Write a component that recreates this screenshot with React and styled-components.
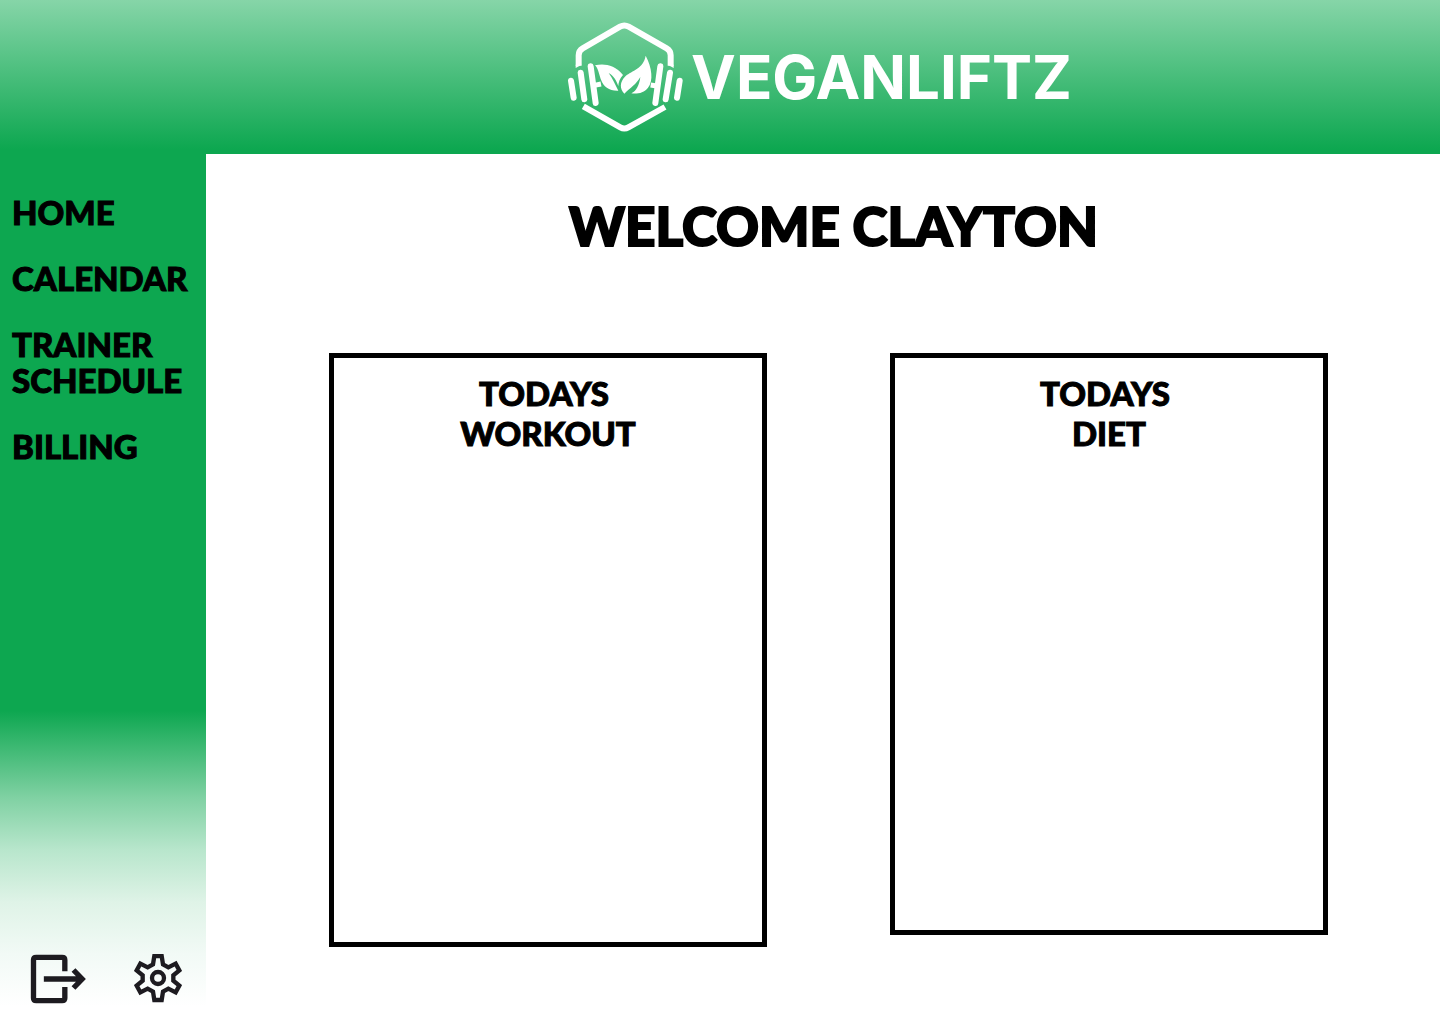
import React from "react";
import styled, { createGlobalStyle } from "styled-components";

const GlobalStyle = createGlobalStyle`
  *, *::before, *::after { box-sizing: border-box; }
  body {
    margin: 0;
    background: #ffffff;
    color: #000000;
    font-family: "Lato Black", Lato, "Liberation Sans", sans-serif;
  }
`;

const Page = styled.div`
  display: flex;
  flex-direction: column;
  min-height: 100vh;
`;

const Header = styled.header`
  display: flex;
  align-items: center;
  justify-content: center;
  height: 154px;
  padding-left: 200px;
  background: linear-gradient(to bottom, #86d5a8 0%, #0da750 97%);
`;

const Brand = styled.a`
  display: flex;
  align-items: center;
  gap: 8px;
  color: #ffffff;
  text-decoration: none;
`;

const BrandMark = styled.svg`
  display: block;
  width: 115px;
  height: 110px;
`;

const BrandName = styled.span`
  font-family: Inter, "Liberation Sans", sans-serif;
  font-size: 60px;
  font-weight: 700;
  line-height: 64px;
`;

const Body = styled.div`
  display: flex;
  flex: 1;
`;

const Sidebar = styled.aside`
  display: flex;
  flex-direction: column;
  justify-content: space-between;
  flex: none;
  width: 206px;
  padding: 40px 12px 20px;
  background: linear-gradient(
    to bottom,
    #0da750 0%,
    #0da750 64%,
    #80d1a3 74%,
    #b8e6cc 80%,
    #dff3e7 86%,
    #f2faf6 92%,
    #ffffff 98%
  );
`;

const NavList = styled.ul`
  display: flex;
  flex-direction: column;
  gap: 30px;
  margin: 0;
  padding: 0;
  list-style: none;
`;

const NavLink = styled.a`
  display: block;
  color: #000000;
  font-size: 33px;
  font-weight: 900;
  line-height: 36px;
  -webkit-text-stroke: 1px #000000;
  text-decoration: none;
`;

const Actions = styled.div`
  display: flex;
  justify-content: space-between;
  align-items: center;
  padding: 0 12px 0 18px;
`;

const IconButton = styled.button`
  display: flex;
  padding: 0;
  border: 0;
  background: none;
  color: #1d1b20;
  cursor: pointer;

  svg {
    display: block;
    width: ${(props) => props.$width}px;
    height: 50px;
  }
`;

const Main = styled.main`
  flex: 1;
  min-width: 0;
  padding: 40px 112px 77px 123px;
`;

const Title = styled.h1`
  margin: 0 0 95px;
  padding-left: 10px;
  font-size: 53px;
  font-weight: 900;
  line-height: 64px;
  text-align: center;
  -webkit-text-stroke: 2px #000000;
`;

const Cards = styled.div`
  display: grid;
  grid-template-columns: 1fr 1fr;
  align-items: start;
  gap: 123px;
`;

const Card = styled.section`
  min-height: ${(props) => props.$height}px;
  padding: 15px;
  border: 5px solid #000000;
`;

const CardTitle = styled.h2`
  margin: 0;
  font-size: 33px;
  font-weight: 900;
  line-height: 40px;
  text-align: center;
  -webkit-text-stroke: 1px #000000;
`;

const links = ["HOME", "CALENDAR", "TRAINER SCHEDULE", "BILLING"];

const cards = [
  { id: "workout", name: "WORKOUT", height: 594 },
  { id: "diet", name: "DIET", height: 582 },
];

function Logo() {
  return (
    <BrandMark viewBox="24 22 345 330" fill="none" stroke="#fff" strokeWidth="18" aria-hidden="true">
      <path d="M56 153V122Q56 108 68 101L180 36Q193 29 206 36L320 101Q332 108 332 122V153" />
      <path fill="#fff" stroke="none" d="M47 150H65L47 160ZM341 150H323L341 160Z" />
      <path d="M70 275L181 338Q193 345 205 338L315 277" />
      <path
        strokeLinecap="round"
        d="M33 198L41 249M62 174L73 254M92 155L107 265M359 198L351 249M330 174L317 254M301 155L286 265"
      />
      <path strokeWidth="15" d="M103 212L123 208M272 211L290 214" />
      <g fill="#fff" stroke="none">
        <path d="M105 152C130 146 164 149 189 181C180 190 175 203 175 214C169 197 160 182 146 175C158 192 166 211 175 228C148 229 131 218 122 193C117 176 113 158 105 152Z" />
        <path d="M257 123C276 158 281 199 264 219C252 234 232 239 214 236C229 229 238 211 241 187C229 209 211 219 193 237C179 223 178 202 197 184C216 167 250 163 257 123Z" />
      </g>
    </BrandMark>
  );
}

function LogoutIcon() {
  return (
    <svg viewBox="91 73 167 150" fill="none" stroke="currentColor" strokeWidth="16" aria-hidden="true">
      <path d="M195 125V91Q195 83 187 83H109Q101 83 101 91V205Q101 213 109 213H187Q195 213 195 205V172" />
      <path d="M132 148H246M221 121L247 148L221 175" />
    </svg>
  );
}

function SettingsIcon() {
  return (
    <svg viewBox="399 72 144 150" fill="none" stroke="currentColor" strokeWidth="13" aria-hidden="true">
      <path d="M460 78H482L486 103L502 112L524 101L535 121L517 136V152L535 167L524 187L502 176L486 185L482 210H460L456 185L440 176L418 187L407 167L425 152V136L407 121L418 101L440 112L456 103Z" />
      <circle cx="471" cy="144" r="18" />
    </svg>
  );
}

export default function App() {
  return (
    <Page>
      <GlobalStyle />
      <Header>
        <Brand href="#home">
          <Logo />
          <BrandName>VEGANLIFTZ</BrandName>
        </Brand>
      </Header>
      <Body>
        <Sidebar>
          <nav aria-label="Main">
            <NavList>
              {links.map((label) => (
                <li key={label}>
                  <NavLink href={`#${label.toLowerCase().replace(" ", "-")}`}>{label}</NavLink>
                </li>
              ))}
            </NavList>
          </nav>
          <Actions>
            <IconButton type="button" aria-label="Log out" $width={56}>
              <LogoutIcon />
            </IconButton>
            <IconButton type="button" aria-label="Settings" $width={48}>
              <SettingsIcon />
            </IconButton>
          </Actions>
        </Sidebar>
        <Main>
          <Title>WELCOME CLAYTON</Title>
          <Cards>
            {cards.map((card) => (
              <Card key={card.id} $height={card.height}>
                <CardTitle>
                  TODAYS{"\u00a0"}
                  <br />
                  {card.name}
                </CardTitle>
              </Card>
            ))}
          </Cards>
        </Main>
      </Body>
    </Page>
  );
}
